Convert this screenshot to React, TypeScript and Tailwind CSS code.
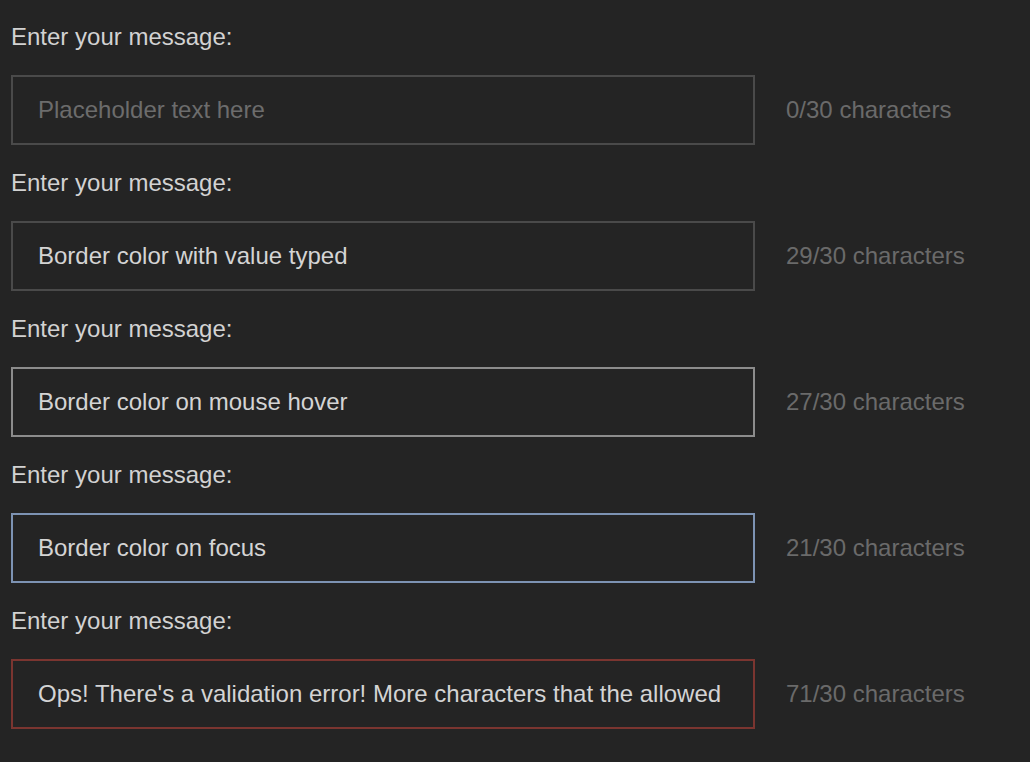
import * as React from "react";

type Field = {
  value: string;
  placeholder?: string;
  count: string;
  border: string;
};

const fields: Field[] = [
  { value: "", placeholder: "Placeholder text here", count: "0/30 characters", border: "border-[#4a4a4a]" },
  { value: "Border color with value typed", count: "29/30 characters", border: "border-[#4a4a4a]" },
  { value: "Border color on mouse hover", count: "27/30 characters", border: "border-[#8c8c8c]" },
  { value: "Border color on focus", count: "21/30 characters", border: "border-[#7d93b3]" },
  {
    value: "Ops! There's a validation error! More characters that the allowed",
    count: "71/30 characters",
    border: "border-[#7b3530]",
  },
];

export default function App() {
  return (
    <div className="min-h-[762px] w-full bg-[#242424] pl-[11px] pt-[23px] font-['Liberation_Sans',Arial,sans-serif] text-[24px]">
      {fields.map((f, i) => (
        <div key={i} className="mb-[24px]">
          <label className="block h-[28px] leading-[28px] text-[#d2d2d2] mb-[24px]">
            Enter your message:
          </label>
          <div className="flex items-center gap-[31px]">
            <input
              readOnly
              value={f.value}
              placeholder={f.placeholder}
              className={`h-[70px] w-[744px] border-2 ${f.border} bg-[#242424] pl-[25px] pr-3 text-[24px] text-[#d4d4d4] placeholder:text-[#6c6c6c] outline-none`}
            />
            <span className="text-[#6a6a6a] leading-[28px]">{f.count}</span>
          </div>
        </div>
      ))}
    </div>
  );
}
